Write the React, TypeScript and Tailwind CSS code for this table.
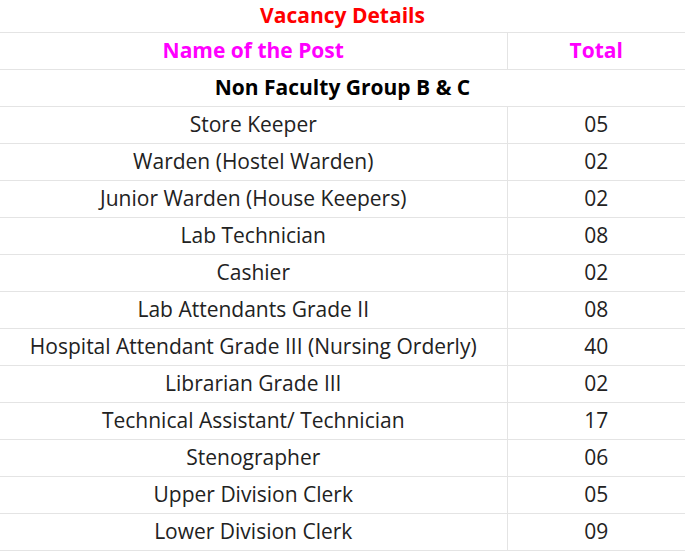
const rows: [string, string][] = [
  ["Store Keeper", "05"],
  ["Warden (Hostel Warden)", "02"],
  ["Junior Warden (House Keepers)", "02"],
  ["Lab Technician", "08"],
  ["Cashier", "02"],
  ["Lab Attendants Grade II", "08"],
  ["Hospital Attendant Grade III (Nursing Orderly)", "40"],
  ["Librarian Grade III", "02"],
  ["Technical Assistant/ Technician", "17"],
  ["Stenographer", "06"],
  ["Upper Division Clerk", "05"],
  ["Lower Division Clerk", "09"],
];

export default function App() {
  return (
    <div className="w-[685px] bg-white font-['Open_Sans',sans-serif] text-[21px] text-[#222]">
      <table className="w-full border-collapse">
        <tbody>
          <tr>
            <td colSpan={2} className="h-[32px] p-0 text-center font-bold text-[#ff0000]">
              Vacancy Details
            </td>
          </tr>
          <tr className="border-y border-[#e4e4e4]">
            <td className="h-[37px] w-[507px] border-r border-[#e4e4e4] p-0 text-center font-bold text-[#ff00ff]">
              Name of the Post
            </td>
            <td className="h-[37px] p-0 text-center font-bold text-[#ff00ff]">Total</td>
          </tr>
          <tr className="border-b border-[#e4e4e4]">
            <td colSpan={2} className="h-[37px] p-0 text-center font-bold text-black">
              Non Faculty Group B &amp; C
            </td>
          </tr>
          {rows.map(([name, total]) => (
            <tr key={name} className="border-b border-[#e4e4e4]">
              <td className="h-[37px] border-r border-[#e4e4e4] p-0 text-center">{name}</td>
              <td className="h-[37px] p-0 text-center">{total}</td>
            </tr>
          ))}
        </tbody>
      </table>
    </div>
  );
}
